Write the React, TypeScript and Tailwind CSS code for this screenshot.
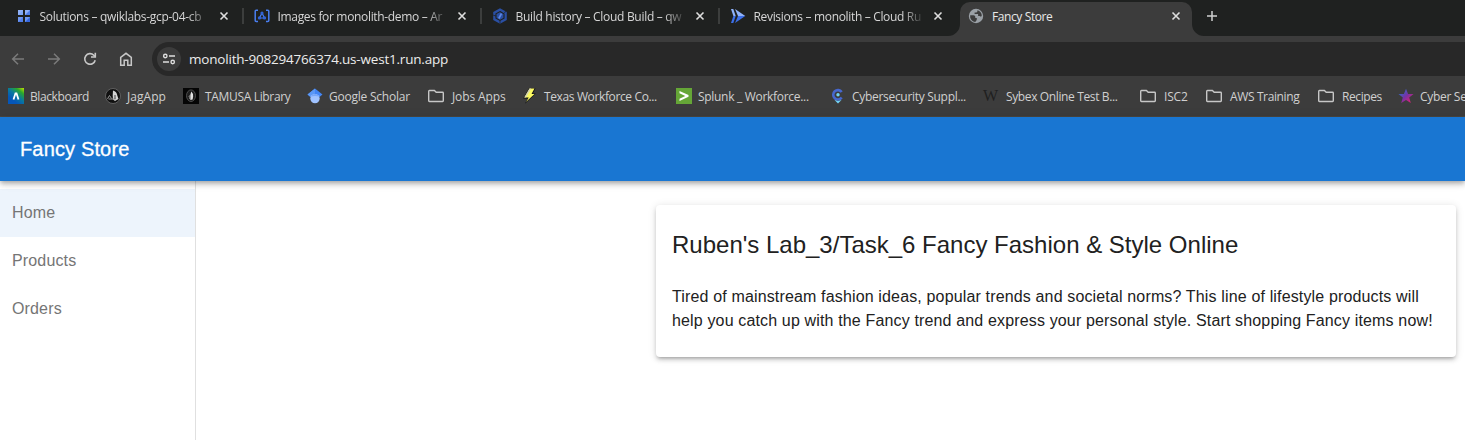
import type { ReactNode } from 'react';

const CloseIcon = () => (
  <svg width="10" height="10" viewBox="0 0 10 10" className="shrink-0" fill="none" stroke="#dedede" strokeWidth="1.6">
    <path d="M1.5 1.5 8.5 8.5M8.5 1.5 1.5 8.5" />
  </svg>
);

const SolutionsIcon = () => (
  <svg width="16" height="16" viewBox="0 0 16 16">
    <path d="M2 2h5v5H2zM9 9h5v5H9z" fill="#7ea6f5" />
    <path d="M9 2h5v5H9zM2 9h5v5H2z" fill="#4f7de8" />
    <path d="M2 7 7 2H2zM9 7l5-5H9z" fill="#8fb0f7" />
    <path d="M2 14l5-5H2zM9 14l5-5H9z" fill="#6f98f2" />
    <path d="M9 14l5-5v5z" fill="#3567dd" />
  </svg>
);

const ArtifactIcon = () => (
  <svg width="16" height="16" viewBox="0 0 16 16" fill="none" stroke="#4a7ff0" strokeWidth="1.500">
    <path d="M4 2.200H2.200Q1.200 2.200 1.200 3.200V12.500q0 1 1 1H4M12 2.200h1.800q1 0 1 1v9.300q0 1-1 1H12" />
    <path d="M8 5 5.500 10h5z" strokeWidth="1.200" />
    <circle cx="8" cy="5" r="1.600" fill="#2f62d8" stroke="none" />
    <circle cx="5.500" cy="9.900" r="1.700" fill="#2f62d8" stroke="none" />
    <circle cx="10.500" cy="9.900" r="1.700" fill="#2f62d8" stroke="none" />
  </svg>
);

const BuildIcon = () => (
  <svg width="16" height="16" viewBox="0 0 16 16">
    <path d="M8 .3 14.800 4v8L8 15.700 1.200 12V4z" fill="#2a4fa3" />
    <path d="M8 3.600 12 5.800v4.400L8 12.400 4 10.200V5.800z" fill="none" stroke="#1f2120" strokeWidth="1.100" />
    <path d="M1.200 7.200 4 8M12.200 4.500l1.800-1M8 12.500v3" stroke="#1f2120" strokeWidth=".8" />
    <path d="M9.500 5.500 6.800 10.500" stroke="#5c86e6" strokeWidth="1.700" />
  </svg>
);

const CloudRunIcon = () => (
  <svg width="16" height="16" viewBox="0 0 16 16">
    <path d="M5 1 15.300 8H8z" fill="#8fb2fa" />
    <path d="M15.300 8 5 15 8 8z" fill="#3c6fe8" />
    <path d="M1 1h2.300L5.700 8H3.400z" fill="#8fb2fa" />
    <path d="M1 15h2.300L5.700 8H3.400z" fill="#3c6fe8" />
  </svg>
);

const GlobeIcon = () => (
  <svg width="16" height="16" viewBox="0 0 16 16">
    <circle cx="8" cy="8" r="7.200" fill="#9aa0a6" />
    <path
      d="M2.200 7.200h3.300q1.800.2 1.800 1.600v1.100h1.500v1.500q-.3 1.200-1.600 2.500Q3.300 13.500 2.200 9.500zM9.400 2.300v.9Q9.300 4.500 8 4.500H6.600v1.400h3.500v2.100h1.500q1 .1 1.300.9l.9-1.300q-.2-3.900-4.400-5.300z"
      fill="#3c3c3c"
    />
  </svg>
);

const FolderIcon = () => (
  <svg width="16" height="14" viewBox="0 0 16 14" fill="none" stroke="#c7c7c7" strokeWidth="1.400">
    <path d="M.7 2.400V11.800q0 .7.7.7H14.600q.7 0 .7-.7V4q0-.7-.7-.7H8.200L6.400 1.500H1.400Q.7 1.500.7 2.400z" />
  </svg>
);

const BlackboardIcon = () => (
  <svg width="16" height="16" viewBox="0 0 16 16">
    <defs>
      <linearGradient id="bb" x1="1" y1="0" x2=".35" y2=".8">
        <stop offset="0" stopColor="#c5e000" />
        <stop offset=".3" stopColor="#2aa82c" />
        <stop offset=".65" stopColor="#0878a0" />
        <stop offset="1" stopColor="#0556b8" />
      </linearGradient>
    </defs>
    <path d="M0 0h16v16H0z" fill="url(#bb)" />
    <path d="M5.500 11.500 7.500 5.300h1l2 6.200" fill="none" stroke="#fff" strokeWidth="1.800" />
  </svg>
);

const JagIcon = () => (
  <svg width="16" height="16" viewBox="0 0 16 16">
    <circle cx="8" cy="8" r="7.500" fill="#111" stroke="#6d6d6d" strokeWidth=".8" />
    <path d="M8 2.500q3.800 1 4.300 5l1.200 3.500-3.500 2-2-1.500-.3-4z" fill="#d4d4d4" />
    <path d="M2.500 10.800 4.500 7.500l2 3M3.500 11h7" stroke="#999" strokeWidth="1" fill="none" />
    <path d="M10 7v4" stroke="#444" />
  </svg>
);

const LibraryIcon = () => (
  <svg width="16" height="16" viewBox="0 0 16 16">
    <path d="M0 0h16v16H0z" fill="#050505" />
    <ellipse cx="8" cy="7.700" rx="4.500" ry="5.800" fill="#1d1d1d" stroke="#5d5d5d" strokeWidth=".8" />
    <path d="M8.300 3.500q2.200 2 1.800 5l-.5 3L7.300 12V7z" fill="#e3e3e3" />
    <path d="M5.500 8.500 6.500 7.500v3.500" stroke="#888" strokeWidth=".8" fill="none" />
  </svg>
);

const ScholarIcon = () => (
  <svg width="16" height="16" viewBox="0 0 16 16">
    <path d="M8 .5 15.500 6.500 12.500 9 8 6 3.500 9 .5 6.500z" fill="#4285f4" />
    <path d="M8 .5v6L3.500 9 .5 6.500z" fill="#5b98f6" />
    <circle cx="8" cy="10.600" r="4.700" fill="#a0c3ff" />
    <path d="M3.700 8.600q1.400-2.600 4.300-2.600t4.300 2.600Q8 7.200 3.700 8.600z" fill="#76a7fa" />
  </svg>
);

const BoltIcon = () => (
  <svg width="16" height="16" viewBox="0 0 16 16">
    <path d="M7 .3h6.500L10.800 5.500h3L3 15.800 5.500 10.500H1.200z" fill="#111" />
    <path d="M7.500.5h5L9.500 6h3L4 14l2.700-4.500H2.300z" fill="#fbf962" />
    <path d="M7.500.5 2.300 9.500H3.800L9.200.5z" fill="#d2d2b8" />
  </svg>
);

const SplunkIcon = () => (
  <svg width="16" height="16" viewBox="0 0 16 16">
    <path d="M0 0h16v16H0z" fill="#65a637" />
    <path d="M3.500 3 12.500 7.100v1.600L3.500 13v-2.300L9.300 8 3.500 5.300z" fill="#fff" />
  </svg>
);

const CyberIcon = () => (
  <svg width="16" height="16" viewBox="0 0 16 16">
    <path d="M11.700 4A4.700 4.700 0 1 0 11.700 9.600" fill="none" stroke="#4667cf" strokeWidth="2.600" />
    <circle cx="8" cy="6.800" r="1.700" fill="#72d3f3" />
    <path d="M4.500 12 8 15.400 11.500 12 8 13z" fill="#72d3f3" />
  </svg>
);

const WIcon = () => (
  <span className="-ml-px font-['Liberation_Serif',serif] text-[16px] leading-4 text-[#202020]">W</span>
);

const StarIcon = () => (
  <svg width="16" height="16" viewBox="0 0 16 16">
    <defs>
      <linearGradient id="star" x1="0" y1="0" x2="1" y2="1">
        <stop offset=".15" stopColor="#3269c8" />
        <stop offset=".5" stopColor="#7632a5" />
        <stop offset=".85" stopColor="#d52278" />
      </linearGradient>
    </defs>
    <path d="M8 .8 10.100 6h5.400l-4.300 3.500 1.600 5.500L8 11.900 3.200 15l1.600-5.500L.5 6h5.400z" fill="url(#star)" />
  </svg>
);

const tabs: { title: string; icon: ReactNode; tracking: string }[] = [
  { title: 'Solutions – qwiklabs-gcp-04-cb', icon: <SolutionsIcon />, tracking: 'tracking-[-0.3px]' },
  { title: 'Images for monolith-demo – Ar', icon: <ArtifactIcon />, tracking: 'tracking-[-0.33px]' },
  { title: 'Build history – Cloud Build – qw', icon: <BuildIcon />, tracking: 'tracking-[-0.3px]' },
  { title: 'Revisions – monolith – Cloud Ru', icon: <CloudRunIcon />, tracking: 'tracking-[-0.33px]' },
];

const bookmarks: { label: string; icon: ReactNode; box: string; gap: string; tracking: string }[] = [
  { label: 'Blackboard', icon: <BlackboardIcon />, box: 'w-[97px]', gap: 'gap-[6px]', tracking: 'tracking-[-0.4px]' },
  { label: 'JagApp', icon: <JagIcon />, box: 'w-[78px]', gap: 'gap-[6px]', tracking: 'tracking-[0.05px]' },
  { label: 'TAMUSA Library', icon: <LibraryIcon />, box: 'w-[124px]', gap: 'gap-[6px]', tracking: 'tracking-[-0.33px]' },
  { label: 'Google Scholar', icon: <ScholarIcon />, box: 'w-[121px]', gap: 'gap-[6px]', tracking: 'tracking-[-0.23px]' },
  { label: 'Jobs Apps', icon: <FolderIcon />, box: 'w-[94px]', gap: 'gap-[8px]', tracking: 'tracking-[-0.1px]' },
  { label: 'Texas Workforce Co...', icon: <BoltIcon />, box: 'w-[154px]', gap: 'gap-[6px]', tracking: 'tracking-[-0.37px]' },
  { label: 'Splunk _ Workforce...', icon: <SplunkIcon />, box: 'w-[154px]', gap: 'gap-[6px]', tracking: 'tracking-[-0.3px]' },
  { label: 'Cybersecurity Suppl...', icon: <CyberIcon />, box: 'w-[154px]', gap: 'gap-[6px]', tracking: 'tracking-[-0.3px]' },
  { label: 'Sybex Online Test B...', icon: <WIcon />, box: 'w-[156px]', gap: 'gap-[6px]', tracking: 'tracking-[-0.37px]' },
  { label: 'ISC2', icon: <FolderIcon />, box: 'w-[66px]', gap: 'gap-[8px]', tracking: 'tracking-[-0.2px]' },
  { label: 'AWS Training', icon: <FolderIcon />, box: 'w-[112px]', gap: 'gap-[8px]', tracking: 'tracking-[-0.37px]' },
  { label: 'Recipes', icon: <FolderIcon />, box: 'w-[80px]', gap: 'gap-[8px]', tracking: 'tracking-[-0.4px]' },
  { label: 'Cyber Se', icon: <StarIcon />, box: 'w-[67px]', gap: 'gap-[6px]', tracking: 'tracking-[-0.3px]' },
];

const Flare = ({ flip = false }: { flip?: boolean }) => (
  <svg width="12" height="12" viewBox="0 0 12 12" className={flip ? 'shrink-0 -scale-x-100 self-end' : 'shrink-0 self-end'}>
    <path d="M12 0A12 12 0 0 1 0 12H12z" fill="#3c3c3c" />
  </svg>
);

function TabStrip() {
  return (
    <div className="flex h-9 bg-[#1f2120] text-[12px] text-[#d6d6d6]">
      <div className="flex w-[948px] shrink-0 pl-1.5">
        {tabs.map((tab, i) => (
          <div key={tab.title} className="flex h-8 w-[238px] shrink-0 items-center pl-2.5">
            <span className="flex w-4 shrink-0">{tab.icon}</span>
            <span
              className={`ml-[7.500px] w-[167.500px] pt-0.5 whitespace-nowrap [mask-image:linear-gradient(to_right,black_148px,transparent_171px)] ${tab.tracking}`}
            >
              {tab.title}
            </span>
            <span className="ml-3 flex">
              <CloseIcon />
            </span>
            {i < 3 && <span className="ml-[13px] h-4 w-0.5 shrink-0 bg-[#3c3e3d]" />}
          </div>
        ))}
      </div>
      <Flare />
      <div className="mt-0.5 flex w-[232px] shrink-0 items-center rounded-t-[10px] bg-[#3c3c3c] pb-1.5 pl-2 text-[#e8e8e8]">
        <GlobeIcon />
        <span className="ml-2 w-[174px] pt-0.5 tracking-[-0.4px]">Fancy Store</span>
        <span className="ml-[5px] flex">
          <CloseIcon />
        </span>
      </div>
      <Flare flip />
      <svg width="12" height="12" viewBox="0 0 12 12" className="mt-[10px] ml-[2px]" stroke="#cfcfcf" strokeWidth="1.500">
        <path d="M6 1v10M1 6h10" />
      </svg>
    </div>
  );
}

function Toolbar() {
  return (
    <div className="flex h-[46px] items-center">
      <div className="flex w-[152px] shrink-0 items-center gap-5 pl-[10px]">
        <svg width="16" height="16" viewBox="0 0 16 16" fill="none" stroke="#7b7b7b" strokeWidth="1.500">
          <path d="M14 8H3M8 2.700 2.700 8 8 13.300" />
        </svg>
        <svg width="16" height="16" viewBox="0 0 16 16" fill="none" stroke="#7b7b7b" strokeWidth="1.500">
          <path d="M2 8h11M8 2.700 13.300 8 8 13.300" />
        </svg>
        <svg width="16" height="16" viewBox="0 0 16 16" fill="none" stroke="#c7c7c7" strokeWidth="1.600">
          <path d="M13.200 9.200A5.300 5.300 0 1 1 11.800 4.200L13 5.500" />
          <path d="M13.300 1.800V6H9" />
        </svg>
        <svg width="16" height="16" viewBox="0 0 16 16" fill="none" stroke="#c7c7c7" strokeWidth="1.500">
          <path d="M2.700 14.200V6.300L8 2.300l5.300 4v7.900H9.800V9.300H6.200v4.900z" />
        </svg>
      </div>
      <div className="flex h-[34px] flex-1 items-center rounded-l-full bg-[#282828] pl-[5px]">
        <span className="flex size-6 items-center justify-center rounded-full bg-[#3c3c3c]">
          <svg width="14" height="14" viewBox="0 0 14 14" fill="none" stroke="#dedede" strokeWidth="1.400">
            <circle cx="3.300" cy="4" r="1.700" />
            <path d="M7 4h6M1 10h6" />
            <circle cx="10.700" cy="10" r="1.700" />
          </svg>
        </span>
        <span className="ml-2 text-[13.500px] tracking-[-0.2px] whitespace-nowrap text-[#ececec]">
          monolith-908294766374.us-west1.run.app
        </span>
      </div>
    </div>
  );
}

function Bookmarks() {
  return (
    <div className="flex h-[35px] overflow-hidden border-b border-[#4b4741] pb-1.5 pl-2 text-[12px] text-[#d0d0d0]">
      {bookmarks.map((b) => (
        <div key={b.label} className={`flex shrink-0 items-center whitespace-nowrap ${b.box} ${b.gap}`}>
          <span className="flex w-4 shrink-0">{b.icon}</span>
          <span className={`pt-px ${b.tracking}`}>{b.label}</span>
        </div>
      ))}
    </div>
  );
}

export default function App() {
  return (
    <div className="flex h-[440px] w-[1465px] flex-col overflow-hidden bg-white">
      <div className="flex h-[117px] shrink-0 flex-col bg-[#3c3c3c] font-['Open_Sans',sans-serif]">
        <TabStrip />
        <Toolbar />
        <Bookmarks />
      </div>
      <div className="flex min-h-0 flex-1 flex-col font-['Liberation_Sans',sans-serif]">
        <header className="z-10 flex h-16 shrink-0 items-center bg-[#1976d2] pl-5 shadow-[0px_2px_4px_-1px_rgba(0,0,0,0.2),0px_4px_5px_0px_rgba(0,0,0,0.14),0px_1px_10px_0px_rgba(0,0,0,0.12)]">
          <h1 className="text-[20px] font-normal tracking-[0.15px] text-white [-webkit-text-stroke:0.3px_white]">Fancy Store</h1>
        </header>
        <div className="flex flex-1">
          <nav className="w-[196px] shrink-0 border-r border-[#e0e0e0] pt-2 text-[16px] tracking-[0.15px] text-[#757575]">
            <div className="flex h-12 items-center bg-[#edf4fc] pl-3">Home</div>
            <div className="flex h-12 items-center pl-3">Products</div>
            <div className="flex h-12 items-center pl-3">Orders</div>
          </nav>
          <main className="flex flex-1 items-start justify-end pt-6 pr-[9px]">
            <section className="h-[152px] w-[800px] rounded-[4px] bg-white px-4 pt-6 text-[#212121] shadow-[0px_3px_3px_-2px_rgba(0,0,0,0.2),0px_3px_4px_0px_rgba(0,0,0,0.14),0px_1px_8px_0px_rgba(0,0,0,0.12)]">
              <h2 className="text-[24px] leading-8">Ruben's Lab_3/Task_6 Fancy Fashion &amp; Style Online</h2>
              <p className="mt-6 text-[16px] leading-6 tracking-[0.15px]">
                Tired of mainstream fashion ideas, popular trends and societal norms? This line of lifestyle products will
                help you catch up with the Fancy trend and express your personal style. Start shopping Fancy items now!
              </p>
            </section>
          </main>
        </div>
      </div>
    </div>
  );
}
